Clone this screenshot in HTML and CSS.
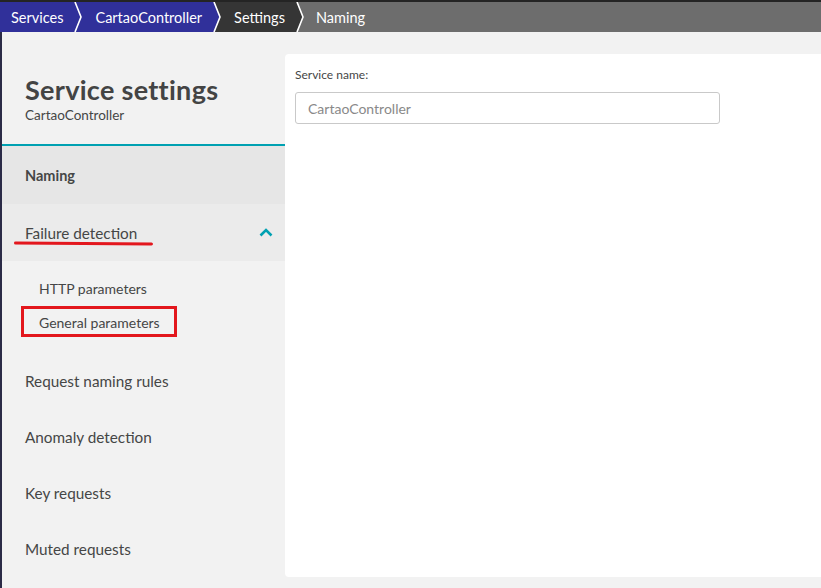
FILE: index.html
```html
<!DOCTYPE html>
<html>
<head>
<meta charset="utf-8">
<link rel="stylesheet" href="styles.css">
</head>
<body>
<div class="topstrip"></div>
<nav class="crumbs">
  <span class="crumb blue first">Services</span>
  <svg class="sep" width="14" height="30" viewBox="0 0 14 30"><rect width="14" height="30" fill="#30309a"/><polyline points="4,0 10,15 4,30" fill="none" stroke="#fff" stroke-width="1.6"/></svg>
  <span class="crumb blue">CartaoController</span>
  <svg class="sep" width="14" height="30" viewBox="0 0 14 30"><rect width="14" height="30" fill="#353535"/><polygon points="0,0 4,0 10,15 4,30 0,30" fill="#30309a"/><polyline points="4,0 10,15 4,30" fill="none" stroke="#fff" stroke-width="1.6"/></svg>
  <span class="crumb dark">Settings</span>
  <svg class="sep" width="14" height="30" viewBox="0 0 14 30"><rect width="14" height="30" fill="#6d6d6d"/><polygon points="0,0 4,0 10,15 4,30 0,30" fill="#353535"/><polyline points="4,0 10,15 4,30" fill="none" stroke="#fff" stroke-width="1.6"/></svg>
  <span class="crumb gray">Naming</span>
</nav>
<div class="layout">
  <aside class="sidebar">
    <header class="side-head">
      <h1 class="title">Service settings</h1>
      <div class="subtitle">CartaoController</div>
    </header>
    <ul class="menu">
      <li class="item active">Naming</li>
      <li class="item open">
        <span class="annot-under">Failure detection</span>
        <svg class="chev" width="14" height="9" viewBox="0 0 14 9"><polyline points="1.5,7.5 7,2 12.5,7.5" fill="none" stroke="#00a1b2" stroke-width="2.6"/></svg>
      </li>
      <li class="subs">
        <div class="sub">HTTP parameters</div>
        <div class="sub boxed">General parameters</div>
      </li>
      <li class="item">Request naming rules</li>
      <li class="item">Anomaly detection</li>
      <li class="item">Key requests</li>
      <li class="item">Muted requests</li>
    </ul>
  </aside>
  <main class="main">
    <section class="panel">
      <label class="label">Service name:</label>
      <div class="input">CartaoController</div>
    </section>
  </main>
</div>
</body>
</html>
```
FILE: styles.css
```css
*, *::before, *::after { box-sizing: border-box; }
html, body { margin: 0; padding: 0; }
body {
  width: 821px;
  height: 588px;
  overflow: hidden;
  background: #f2f2f2;
  font-family: Lato, "Open Sans", sans-serif;
  color: #454646;
}
.topstrip { height: 2px; background: #242424; }
.crumbs {
  display: flex;
  height: 30px;
  background: #6d6d6d;
  align-items: stretch;
}
.crumb {
  display: flex;
  align-items: center;
  color: #fff;
  font-size: 14.5px;
  padding: 0 8px 0 10px;
  white-space: nowrap;
}
.crumb.first { padding-left: 11px; }
.crumb.blue { background: #30309a; }
.crumb.dark { background: #353535; }
.crumb.gray { background: #6d6d6d; padding-left: 9px; }
.sep { display: block; flex: none; }

.layout {
  display: flex;
  height: 556px;
}
.sidebar {
  width: 285px;
  flex: none;
  border-left: 2px solid #2b2b47;
  background: #f2f2f2;
}
.side-head {
  height: 114px;
  padding: 43px 0 0 23px;
  border-bottom: 2px solid #00a1b2;
}
.title {
  margin: 0;
  font-size: 27px;
  font-weight: 700;
  line-height: 30px;
  color: #434444;
  letter-spacing: 0.3px;
}
.subtitle {
  font-size: 13.5px;
  line-height: 18px;
  margin-top: 1px;
}
.menu { list-style: none; margin: 0; padding: 0; }
.item {
  height: 56px;
  display: flex;
  align-items: center;
  justify-content: space-between;
  padding: 0 12px 0 23px;
  font-size: 15.3px;
}
.item.active {
  height: 58px;
  background: #e6e6e6;
  font-weight: 700;
  font-size: 14.5px;
}
.item.open {
  height: 57px;
  background: #ebebeb;
  position: relative;
}
.annot-under { position: relative; }
.annot-under::after {
  content: "";
  position: absolute;
  left: -11px;
  right: -16px;
  bottom: -3px;
  height: 3px;
  background: #e3171d;
  border-radius: 2px;
  transform: rotate(0.4deg);
}
.chev { display: block; }
.subs {
  padding: 10px 0 14px 37px;
}
.sub {
  height: 34px;
  display: flex;
  align-items: center;
  font-size: 14px;
}
.sub.boxed { position: relative; }
.sub.boxed::before {
  content: "";
  position: absolute;
  left: -18px;
  top: 1px;
  width: 156px;
  height: 31px;
  border: 3px solid #e3171d;
}
.main {
  flex: 1;
  padding-top: 22px;
}
.panel {
  background: #fff;
  height: 523px;
  border-radius: 4px 0 0 4px;
  padding: 14px 10px;
}
.label {
  display: block;
  font-size: 12px;
  line-height: 14px;
  color: #454646;
}
.input {
  margin-top: 10px;
  width: 425px;
  height: 32px;
  border: 1px solid #c9c9c9;
  border-radius: 3px;
  padding: 0 12px;
  display: flex;
  align-items: center;
  font-size: 14px;
  color: #898989;
}
```
